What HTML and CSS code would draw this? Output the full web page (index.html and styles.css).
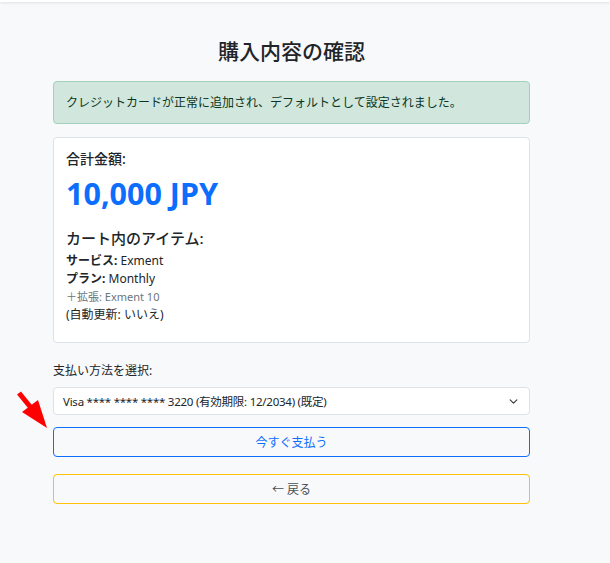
FILE: index.html
```html
<!DOCTYPE html>
<html lang="ja">
<head>
  <meta charset="UTF-8" />
  <meta name="viewport" content="width=device-width, initial-scale=1" />
  <title>購入内容の確認</title>
  <link rel="stylesheet" href="styles.css">
</head>
<body>
  <div class="topbar"></div>

  <main class="checkout">
    <h1 class="checkout-title">購入内容の確認</h1>

    <div class="alert alert-success">クレジットカードが正常に追加され、デフォルトとして設定されました。</div>

    <section class="summary">
      <h2 class="summary-label">合計金額:</h2>
      <p class="summary-total">10,000 JPY</p>

      <h3 class="items-title">カート内のアイテム:</h3>
      <ul class="items">
        <li><strong>サービス:</strong> Exment</li>
        <li><strong>プラン:</strong> Monthly</li>
        <li class="item-addon">＋拡張: Exment 10</li>
        <li>(自動更新: いいえ)</li>
      </ul>
    </section>

    <label class="field-label" for="payment">支払い方法を選択:</label>
    <div class="select" id="payment">
      <span class="select-value">Visa **** **** **** 3220 (有効期限: 12/2034) (既定)</span>
      <svg class="select-caret" viewBox="0 0 16 16" width="9" height="9">
        <path d="M2 5l6 6 6-6" fill="none" stroke="#343a40" stroke-width="2" stroke-linecap="round" stroke-linejoin="round" />
      </svg>
    </div>

    <button class="btn btn-pay" type="button">今すぐ支払う</button>
    <button class="btn btn-back" type="button">← 戻る</button>
  </main>

  <!-- annotation arrow pointing at the pay button -->
  <svg class="annotation" viewBox="0 0 60 60" width="60" height="60">
    <line x1="4" y1="8" x2="17" y2="24" stroke="#ff0000" stroke-width="5" />
    <polygon points="7,27 23,15 32,43" fill="#ff0000" />
  </svg>
</body>
</html>
```

FILE: styles.css
```css
body {
  margin: 0;
  background-color: #f8f9fa;
  color: #212529;
  font-family: "Noto Sans", "Noto Sans CJK JP", sans-serif;
  font-size: 12px;
  position: relative;
  min-height: 563px;
}

.topbar {
  height: 2px;
  background-color: #fff;
  box-shadow: 0 1px 3px rgba(0,0,0,0.12);
}

.checkout {
  width: 477px;
  margin-left: 53px;
  display: flex;
  flex-direction: column;
}

.checkout-title {
  margin: 34px 0 15px;
  font-size: 21px;
  line-height: 30px;
  font-weight: 500;
  text-align: center;
}

.alert {
  border: 1px solid #a3cfbb;
  border-radius: 4px;
  padding: 0 12px;
  line-height: 41px;
  font-size: 12px;
}

.alert-success {
  background-color: #d1e7dd;
  color: #0a3622;
}

.summary {
  margin-top: 13px;
  background-color: #fff;
  border: 1px solid #dee2e6;
  border-radius: 4px;
  padding: 10px 12px 18px;
}

.summary-label {
  margin: 0;
  font-size: 14px;
  line-height: 22px;
  font-weight: 500;
}

.summary-total {
  margin: 5px 0 0;
  font-size: 30.5px;
  line-height: 36px;
  font-weight: 700;
  color: #0d6efd;
}

.items-title {
  margin: 16px 0 0;
  font-size: 15px;
  line-height: 22px;
  font-weight: 500;
}

.items {
  list-style: none;
  margin: 3px 0 0;
  padding: 0;
}

.items li {
  line-height: 18px;
}

.items strong {
  font-weight: 700;
}

.item-addon {
  font-size: 11px;
  color: #6c757d;
}

.field-label {
  margin-top: 19px;
  line-height: 18px;
}

.select {
  margin-top: 7px;
  height: 28px;
  box-sizing: border-box;
  border: 1px solid #dee2e6;
  border-radius: 4px;
  background-color: #fff;
  padding: 0 11px 0 9px;
  display: flex;
  align-items: center;
  justify-content: space-between;
}

.select-value {
  font-size: 11.5px;
  letter-spacing: -0.25px;
}

.btn {
  height: 30px;
  box-sizing: border-box;
  border-radius: 4px;
  background-color: transparent;
  font-family: inherit;
  font-size: 12px;
  cursor: pointer;
}

.btn-pay {
  margin-top: 12px;
  border: 1px solid #0d6efd;
  color: #0d6efd;
}

.btn-back {
  margin-top: 17px;
  border: 1px solid #ffc107;
  color: #495057;
}

.annotation {
  position: absolute;
  left: 15px;
  top: 385px;
}
```
